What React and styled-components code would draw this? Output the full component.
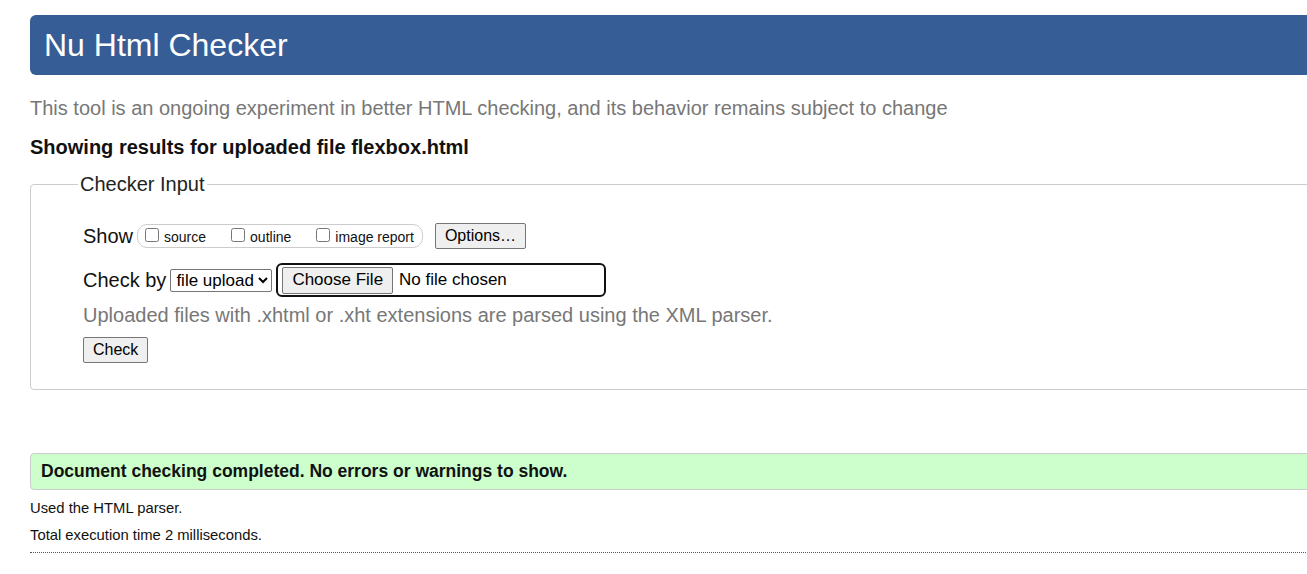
import React from "react";
import styled, { createGlobalStyle } from "styled-components";

const GlobalStyle = createGlobalStyle`
  html, body {
    margin: 0;
    padding: 0;
    background: #fff;
    overflow: hidden;
  }
  body {
    font-family: "Liberation Sans", Arial, sans-serif;
    color: #111;
  }
`;

const App = () => {
  return (
    <Page>
      <GlobalStyle />
      <Header>
        <Title>Nu Html Checker</Title>
      </Header>
      <Intro>
        This tool is an ongoing experiment in better HTML checking, and its behavior remains subject to change
      </Intro>
      <ResultsFor>Showing results for uploaded file flexbox.html</ResultsFor>

      <Fieldset>
        <Legend>Checker Input</Legend>
        <Row>
          <RowLabel>Show</RowLabel>
          <CheckGroup>
            <CheckItem>
              <Box type="checkbox" />
              source
            </CheckItem>
            <CheckItem>
              <Box type="checkbox" />
              outline
            </CheckItem>
            <CheckItem>
              <Box type="checkbox" />
              image report
            </CheckItem>
          </CheckGroup>
          <GrayButton>Options…</GrayButton>
        </Row>
        <Row $tight>
          <RowLabel>Check by</RowLabel>
          <Select defaultValue="file">
            <option value="file">file upload</option>
          </Select>
          <FileBox>
            <GrayButton $big>Choose File</GrayButton>
            <FileName>No file chosen</FileName>
          </FileBox>
        </Row>
        <Note>Uploaded files with .xhtml or .xht extensions are parsed using the XML parser.</Note>
        <GrayButton>Check</GrayButton>
      </Fieldset>

      <Success>Document checking completed. No errors or warnings to show.</Success>
      <Small>Used the HTML parser.</Small>
      <Small>Total execution time 2 milliseconds.</Small>
      <Divider />
    </Page>
  );
};

export default App;

const Page = styled.div`
  width: 1320px;
  padding: 15px 0 0 30px;
`;

const Header = styled.div`
  background-color: #365d95;
  border-radius: 6px;
  height: 60px;
  display: flex;
  align-items: center;
  padding-left: 14px;
`;

const Title = styled.h1`
  margin: 0;
  font-size: 32px;
  font-weight: normal;
  color: #fff;
  line-height: 1;
`;

const Intro = styled.p`
  margin: 21px 0 0;
  font-size: 20px;
  color: #777;
  line-height: 24px;
`;

const ResultsFor = styled.p`
  margin: 15px 0 0;
  font-size: 20px;
  font-weight: bold;
  line-height: 24px;
`;

const Fieldset = styled.fieldset`
  margin: 14px 0 0;
  border: 1px solid #ccc;
  border-radius: 4px;
  padding: 27px 52px 26px;
  min-width: 0;
`;

const Legend = styled.legend`
  font-size: 20px;
  padding: 0 2px;
  margin-left: -5px;
  color: #222;
  line-height: 22px;
`;

const Row = styled.div`
  display: flex;
  align-items: center;
  margin-top: ${(p) => (p.$tight ? "13px" : "0")};
  height: ${(p) => (p.$tight ? "34px" : "28px")};
`;

const RowLabel = styled.span`
  font-size: 20px;
  margin-right: 4px;
  color: #111;
`;

const CheckGroup = styled.div`
  display: flex;
  align-items: center;
  border: 1px solid #ccc;
  border-radius: 10px;
  height: 22px;
  padding: 0 8px 0 7px;
  gap: 25px;
  margin-right: 12px;
`;

const CheckItem = styled.label`
  display: flex;
  align-items: center;
  font-size: 14px;
  color: #111;
  padding-top: 2px;
`;

const Box = styled.input`
  width: 14px;
  height: 14px;
  margin: 0 5px 5px 0;
`;

const GrayButton = styled.button`
  font-family: "Liberation Sans", Arial, sans-serif;
  font-size: ${(p) => (p.$big ? "17px" : "16px")};
  color: #000;
  background: #efefef;
  border: 1px solid #767676;
  border-radius: 2px;
  padding: 2px 9px;
  height: ${(p) => (p.$big ? "27px" : "26px")};
`;

const Select = styled.select`
  font-family: "Liberation Sans", Arial, sans-serif;
  font-size: 17px;
  color: #000;
  height: 23px;
  border: 1px solid #767676;
  border-radius: 2px;
  background: #fff;
  padding: 0 1px;
`;

const FileBox = styled.div`
  display: flex;
  align-items: center;
  width: 322px;
  height: 30px;
  margin-left: 4px;
  border: 2px solid #111;
  border-radius: 6px;
  padding-left: 4px;
  gap: 6px;
`;

const FileName = styled.span`
  font-size: 17px;
  color: #000;
`;

const Note = styled.p`
  margin: 6px 0 10px;
  font-size: 20px;
  color: #777;
  line-height: 24px;
`;

const Success = styled.div`
  margin-top: 63px;
  background: #ccffcc;
  border: 1px solid #ccc;
  border-radius: 4px;
  height: 35px;
  display: flex;
  align-items: center;
  padding-left: 10px;
  font-size: 17.5px;
  font-weight: bold;
  color: #111;
`;

const Small = styled.p`
  margin: 10px 0 0;
  font-size: 14.8px;
  line-height: 17px;
  color: #111;
  &:first-of-type {
    margin-top: 11px;
  }
`;

const Divider = styled.hr`
  margin: 8px 0 0;
  border: none;
  border-top: 1px dotted #555;
`;
